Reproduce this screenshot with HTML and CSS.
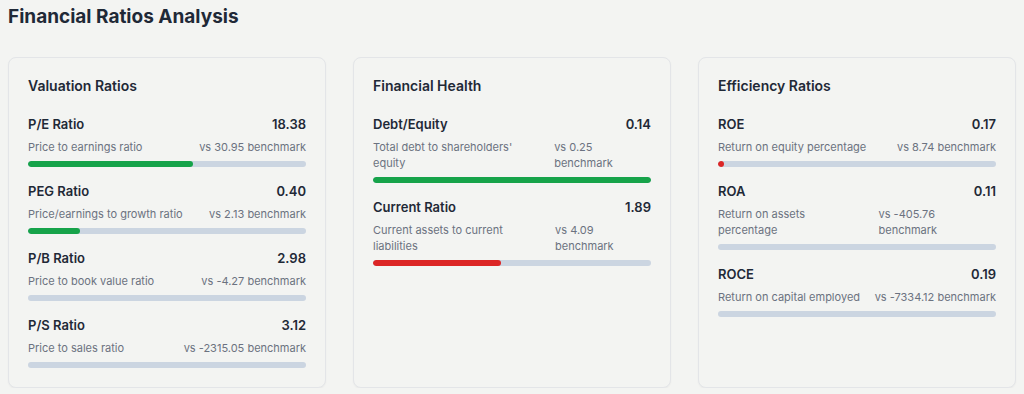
FILE: index.html
```html
<!DOCTYPE html>
<html lang="en">
<head>
    <meta charset="UTF-8">
    <meta name="viewport" content="width=device-width, initial-scale=1.0">
    <title>Financial Ratios Analysis</title>
    <link rel="stylesheet" href="styles.css">
</head>
<body>

<h1 class="page-title">Financial Ratios Analysis</h1>

<div class="card-grid">

    <div class="card">
        <h2 class="card-title">Valuation Ratios</h2>

        <div class="ratio">
            <div class="ratio-head">
                <span class="ratio-name">P/E Ratio</span>
                <span class="ratio-value">18.38</span>
            </div>
            <div class="ratio-info">
                <span class="ratio-desc">Price to earnings ratio</span>
                <span class="ratio-bench">vs 30.95 benchmark</span>
            </div>
            <div class="bar"><div class="bar-fill good" style="width: 59.4%"></div></div>
        </div>

        <div class="ratio">
            <div class="ratio-head">
                <span class="ratio-name">PEG Ratio</span>
                <span class="ratio-value">0.40</span>
            </div>
            <div class="ratio-info">
                <span class="ratio-desc">Price/earnings to growth ratio</span>
                <span class="ratio-bench">vs 2.13 benchmark</span>
            </div>
            <div class="bar"><div class="bar-fill good" style="width: 18.8%"></div></div>
        </div>

        <div class="ratio">
            <div class="ratio-head">
                <span class="ratio-name">P/B Ratio</span>
                <span class="ratio-value">2.98</span>
            </div>
            <div class="ratio-info">
                <span class="ratio-desc">Price to book value ratio</span>
                <span class="ratio-bench">vs -4.27 benchmark</span>
            </div>
            <div class="bar"></div>
        </div>

        <div class="ratio">
            <div class="ratio-head">
                <span class="ratio-name">P/S Ratio</span>
                <span class="ratio-value">3.12</span>
            </div>
            <div class="ratio-info">
                <span class="ratio-desc">Price to sales ratio</span>
                <span class="ratio-bench">vs -2315.05 benchmark</span>
            </div>
            <div class="bar"></div>
        </div>
    </div>

    <div class="card">
        <h2 class="card-title">Financial Health</h2>

        <div class="ratio">
            <div class="ratio-head">
                <span class="ratio-name">Debt/Equity</span>
                <span class="ratio-value">0.14</span>
            </div>
            <div class="ratio-info">
                <span class="ratio-desc">Total debt to shareholders' equity</span>
                <span class="ratio-bench">vs 0.25 benchmark</span>
            </div>
            <div class="bar"><div class="bar-fill good" style="width: 100%"></div></div>
        </div>

        <div class="ratio">
            <div class="ratio-head">
                <span class="ratio-name">Current Ratio</span>
                <span class="ratio-value">1.89</span>
            </div>
            <div class="ratio-info">
                <span class="ratio-desc">Current assets to current liabilities</span>
                <span class="ratio-bench">vs 4.09 benchmark</span>
            </div>
            <div class="bar"><div class="bar-fill bad" style="width: 46.2%"></div></div>
        </div>
    </div>

    <div class="card">
        <h2 class="card-title">Efficiency Ratios</h2>

        <div class="ratio">
            <div class="ratio-head">
                <span class="ratio-name">ROE</span>
                <span class="ratio-value">0.17</span>
            </div>
            <div class="ratio-info">
                <span class="ratio-desc">Return on equity percentage</span>
                <span class="ratio-bench">vs 8.74 benchmark</span>
            </div>
            <div class="bar"><div class="bar-fill bad" style="width: 1.9%"></div></div>
        </div>

        <div class="ratio">
            <div class="ratio-head">
                <span class="ratio-name">ROA</span>
                <span class="ratio-value">0.11</span>
            </div>
            <div class="ratio-info">
                <span class="ratio-desc">Return on assets percentage</span>
                <span class="ratio-bench">vs -405.76 benchmark</span>
            </div>
            <div class="bar"></div>
        </div>

        <div class="ratio">
            <div class="ratio-head">
                <span class="ratio-name">ROCE</span>
                <span class="ratio-value">0.19</span>
            </div>
            <div class="ratio-info">
                <span class="ratio-desc">Return on capital employed</span>
                <span class="ratio-bench">vs -7334.12 benchmark</span>
            </div>
            <div class="bar"></div>
        </div>
    </div>

</div>

</body>
</html>
```

FILE: styles.css
```css
body {
    background-color: #f3f4f2;
    color: #1f2937;
    font-family: Inter, "Liberation Sans", sans-serif;
    margin: 0;
    padding: 0 8px;
}

.page-title {
    font-size: 19px;
    font-weight: 700;
    line-height: 28px;
    margin: 3px 0 0 0;
    color: #1f2937;
}

.card-grid {
    display: grid;
    grid-template-columns: repeat(3, 1fr);
    gap: 27px;
    margin-top: 26px;
}

.card {
    background-color: #f3f4f2;
    border: 1px solid #e3e5e8;
    border-radius: 8px;
    box-shadow: 0 1px 2px rgba(0, 0, 0, 0.04);
    padding: 18px 19px 19px 19px;
}

.card-title {
    font-size: 14px;
    font-weight: 600;
    line-height: 20px;
    margin: 0 0 18px 0;
    color: #1f2937;
}

.ratio {
    margin-bottom: 14px;
}

.ratio:last-child {
    margin-bottom: 0;
}

.ratio-head {
    display: flex;
    justify-content: space-between;
    font-size: 13px;
    font-weight: 600;
    line-height: 20px;
    color: #1f2937;
}

.ratio-info {
    display: flex;
    justify-content: space-between;
    gap: 12px;
    font-size: 11px;
    line-height: 16px;
    color: #6b7280;
    margin-top: 5px;
}

.bar {
    height: 6px;
    border-radius: 3px;
    background-color: #cbd5e1;
    margin-top: 6px;
    overflow: hidden;
}

.bar-fill {
    height: 100%;
    border-radius: 3px;
    min-width: 6px;
}

.bar-fill.good {
    background-color: #16a34a;
}

.bar-fill.bad {
    background-color: #dc2626;
}
```
